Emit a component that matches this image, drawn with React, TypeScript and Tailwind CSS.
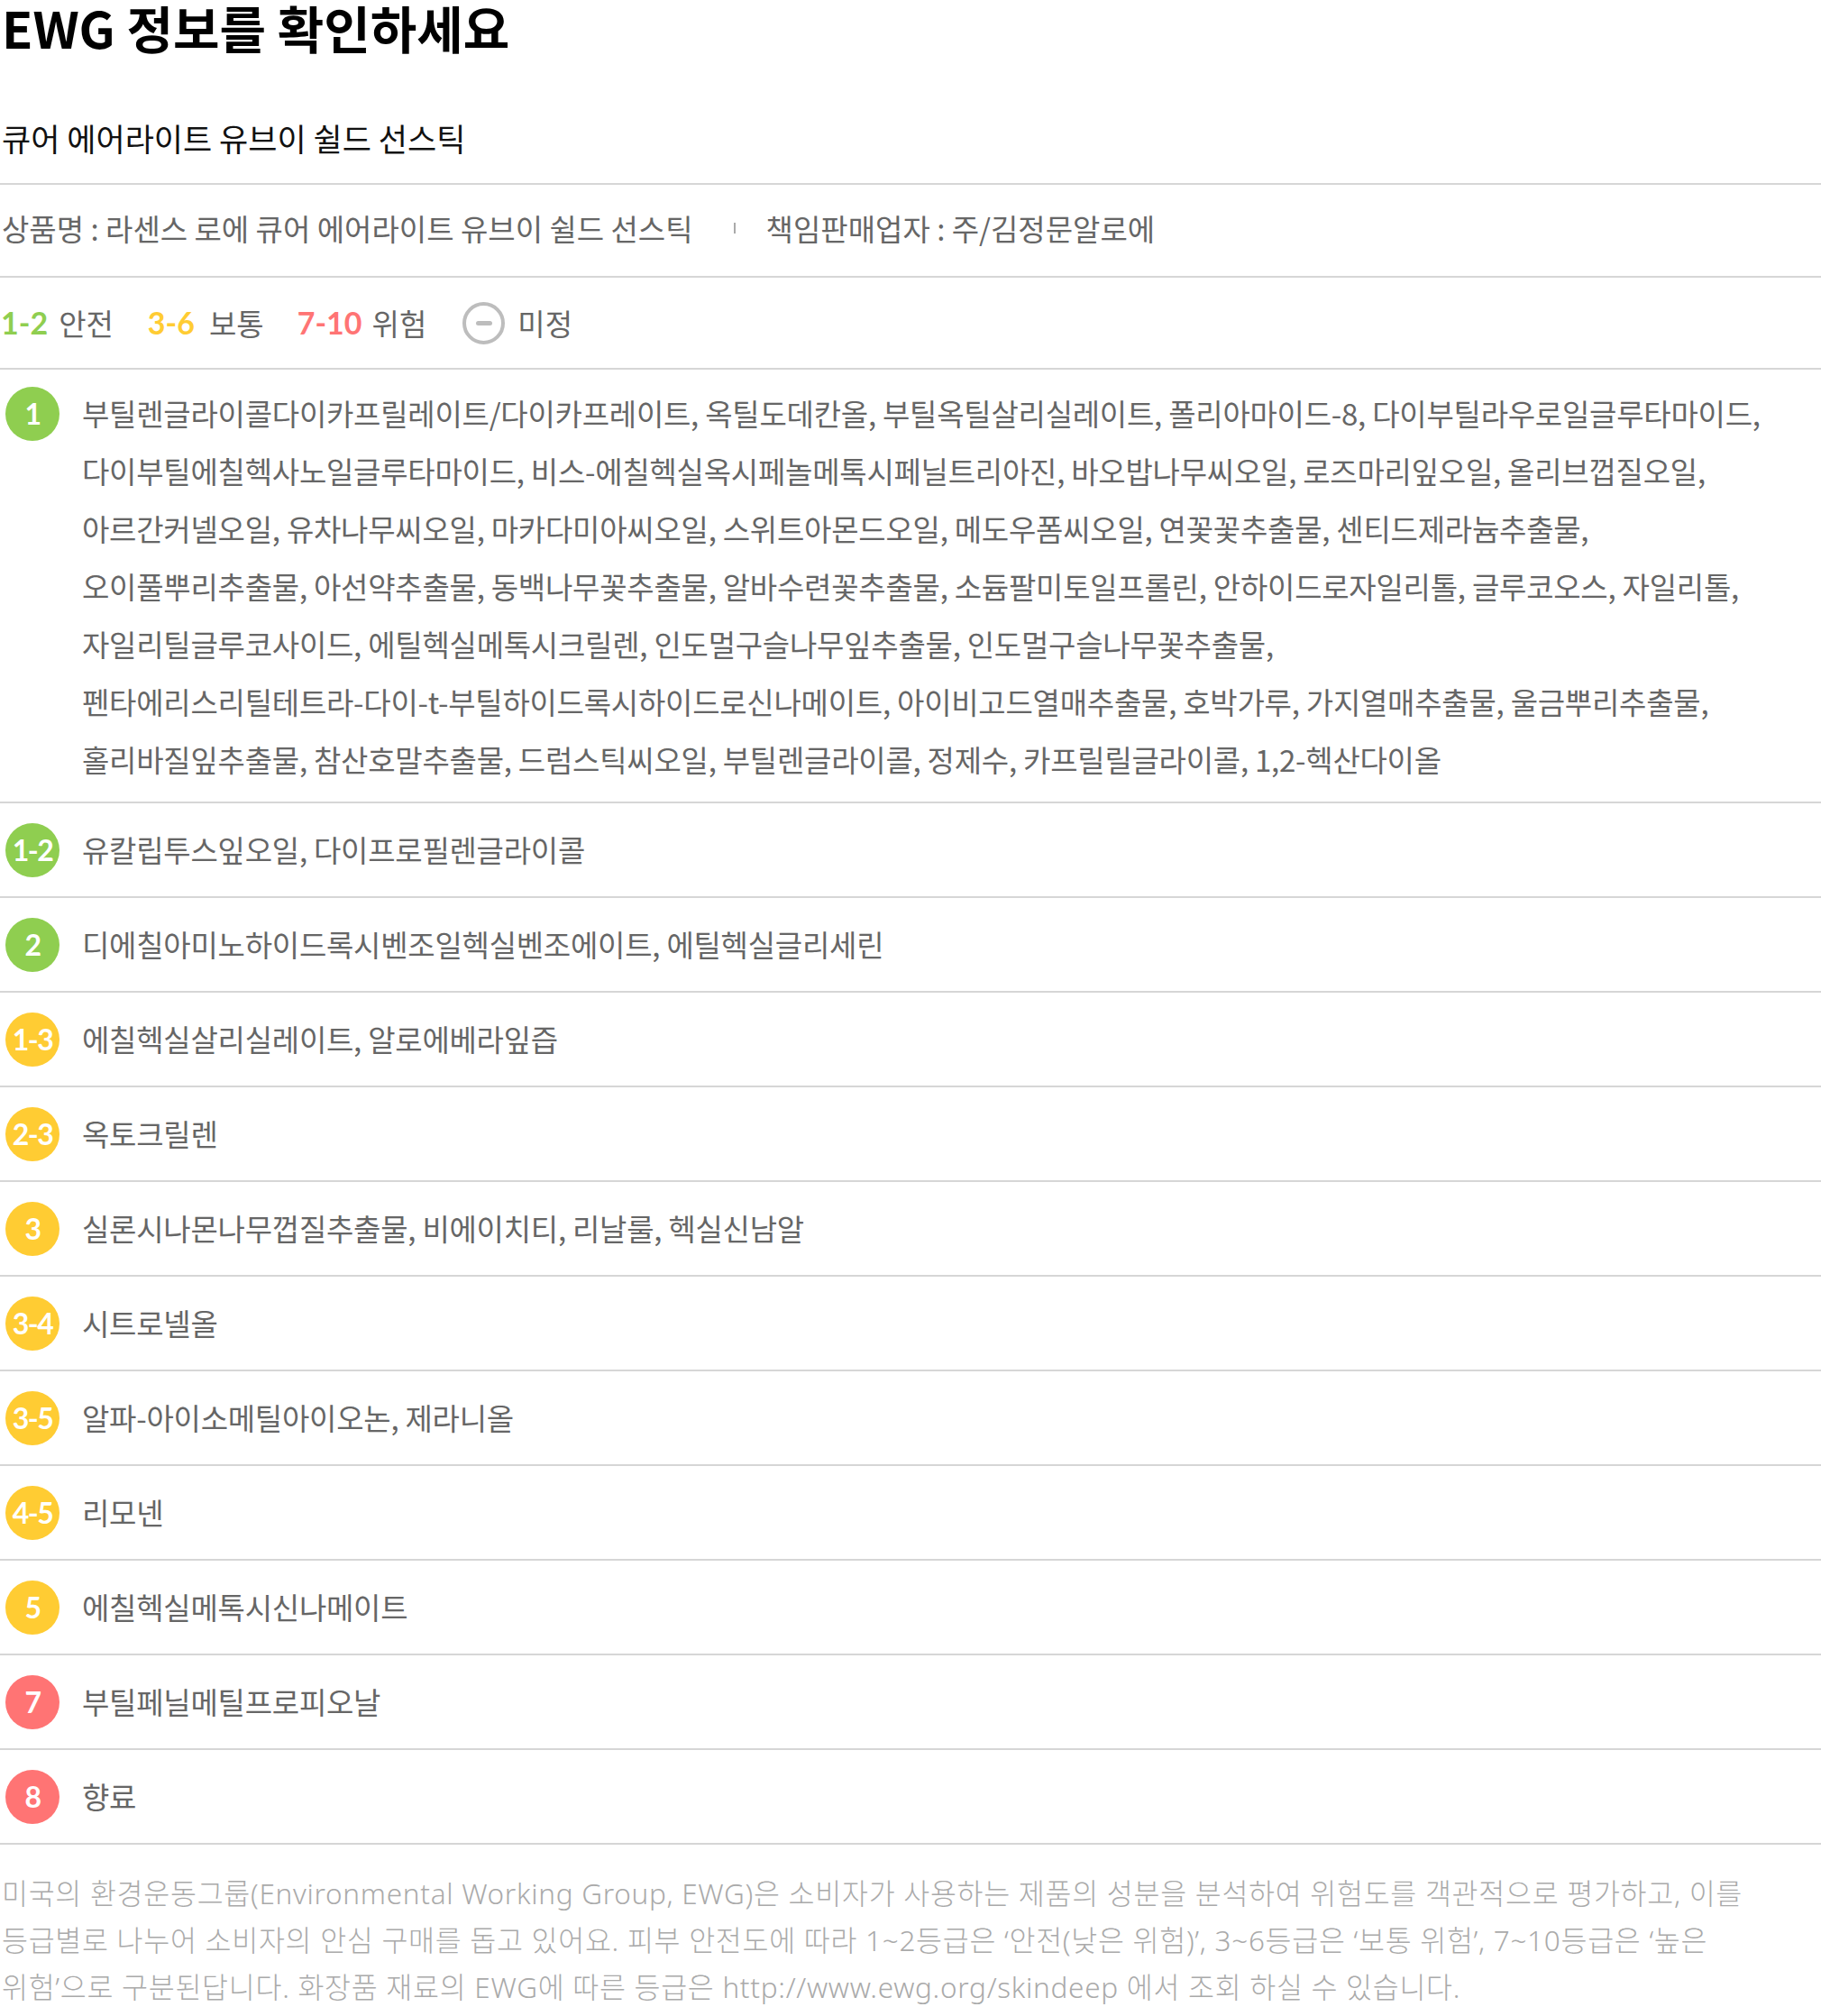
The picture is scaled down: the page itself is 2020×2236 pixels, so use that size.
import React from 'react';

const GREEN = 'bg-[#8fce50]';
const YELLOW = 'bg-[#ffcc33]';
const RED = 'bg-[#ff7474]';

const mainIngredients = [
  '부틸렌글라이콜다이카프릴레이트/다이카프레이트',
  '옥틸도데칸올',
  '부틸옥틸살리실레이트',
  '폴리아마이드-8',
  '다이부틸라우로일글루타마이드',
  '다이부틸에칠헥사노일글루타마이드',
  '비스-에칠헥실옥시페놀메톡시페닐트리아진',
  '바오밥나무씨오일',
  '로즈마리잎오일',
  '올리브껍질오일',
  '아르간커넬오일',
  '유차나무씨오일',
  '마카다미아씨오일',
  '스위트아몬드오일',
  '메도우폼씨오일',
  '연꽃꽃추출물',
  '센티드제라늄추출물',
  '오이풀뿌리추출물',
  '아선약추출물',
  '동백나무꽃추출물',
  '알바수련꽃추출물',
  '소듐팔미토일프롤린',
  '안하이드로자일리톨',
  '글루코오스',
  '자일리톨',
  '자일리틸글루코사이드',
  '에틸헥실메톡시크릴렌',
  '인도멀구슬나무잎추출물',
  '인도멀구슬나무꽃추출물',
  '펜타에리스리틸테트라-다이-t-부틸하이드록시하이드로신나메이트',
  '아이비고드열매추출물',
  '호박가루',
  '가지열매추출물',
  '울금뿌리추출물',
  '홀리바질잎추출물',
  '참산호말추출물',
  '드럼스틱씨오일',
  '부틸렌글라이콜',
  '정제수',
  '카프릴릴글라이콜',
  '1,2-헥산다이올',
];

const rows = [
  { grade: '1-2', color: GREEN, text: '유칼립투스잎오일, 다이프로필렌글라이콜' },
  { grade: '2', color: GREEN, text: '디에칠아미노하이드록시벤조일헥실벤조에이트, 에틸헥실글리세린' },
  { grade: '1-3', color: YELLOW, text: '에칠헥실살리실레이트, 알로에베라잎즙' },
  { grade: '2-3', color: YELLOW, text: '옥토크릴렌' },
  { grade: '3', color: YELLOW, text: '실론시나몬나무껍질추출물, 비에이치티, 리날룰, 헥실신남알' },
  { grade: '3-4', color: YELLOW, text: '시트로넬올' },
  { grade: '3-5', color: YELLOW, text: '알파-아이소메틸아이오논, 제라니올' },
  { grade: '4-5', color: YELLOW, text: '리모넨' },
  { grade: '5', color: YELLOW, text: '에칠헥실메톡시신나메이트' },
  { grade: '7', color: RED, text: '부틸페닐메틸프로피오날' },
  { grade: '8', color: RED, text: '향료' },
];

const Badge = ({ grade, color }: { grade: string; color: string }) => (
  <div
    className={`flex h-[60px] w-[60px] shrink-0 items-center justify-center rounded-full ${color} font-['Lato',sans-serif] text-[32px] font-bold leading-none tracking-[-1.5px] text-white`}
  >
    {grade}
  </div>
);

const App = () => {
  return (
    <div className="w-[2020px] bg-white font-['Noto_Sans_CJK_KR',sans-serif]">
      <div className="border-b-2 border-[#d6d6d6] pl-[2px] pb-[25px]">
        <h1 className="text-[56px] leading-[60px] font-bold text-black">EWG 정보를 확인하세요</h1>
        <h2 className="mt-[68px] text-[35px] leading-[50px] text-[#111]">
          큐어 에어라이트 유브이 쉴드 선스틱
        </h2>
      </div>

      <div className="flex items-center border-b-2 border-[#d6d6d6] pl-[2px] pt-[23px] pb-[28px] text-[33px] leading-[50px] text-[#666]">
        <span>상품명 : 라센스 로에 큐어 에어라이트 유브이 쉴드 선스틱</span>
        <span className="ml-[45px] mr-[34px] h-[12px] w-[2px] bg-[#aaa]" />
        <span>책임판매업자 : 주/김정문알로에</span>
      </div>

      <div className="flex items-center border-b-2 border-[#d6d6d6] pl-[1px] pt-[25px] pb-[25px] text-[33px] leading-[50px] text-[#666]">
        <span className="font-['Lato',sans-serif] text-[34px] font-bold text-[#8fce50]">1-2</span>
        <span className="ml-[12px]">안전</span>
        <span className="ml-[38px] font-['Lato',sans-serif] text-[34px] font-bold text-[#ffcc33]">3-6</span>
        <span className="ml-[16px]">보통</span>
        <span className="ml-[37px] font-['Lato',sans-serif] text-[34px] font-bold text-[#ff7474]">7-10</span>
        <span className="ml-[11px]">위험</span>
        <span className="ml-[40px] flex h-[47px] w-[47px] items-center justify-center rounded-full border-4 border-[#bdbdbd]">
          <span className="h-[5px] w-[18px] rounded-sm bg-[#bdbdbd]" />
        </span>
        <span className="ml-[14px]">미정</span>
      </div>

      <div className="flex items-start border-b-2 border-[#d6d6d6] pl-[6px] pr-[28px] pt-[16px] pb-[15px]">
        <div className="mt-[3px]">
          <Badge grade="1" color={GREEN} />
        </div>
        <p className="ml-[25px] text-[33px] leading-[64px] tracking-[-0.25px] text-[#666]">
          {mainIngredients.map((item, i) => (
            <React.Fragment key={item}>
              <span className="whitespace-nowrap">
                {item}
                {i < mainIngredients.length - 1 ? ',' : ''}
              </span>
              {i < mainIngredients.length - 1 ? ' ' : ''}
            </React.Fragment>
          ))}
        </p>
      </div>

      {rows.map((row) => (
        <div
          key={row.grade}
          className="flex items-center border-b-2 border-[#d6d6d6] pl-[6px] py-[20px]"
        >
          <Badge grade={row.grade} color={row.color} />
          <p className="ml-[25px] text-[33px] leading-[63px] tracking-[-0.25px] text-[#666]">{row.text}</p>
        </div>
      ))}

      <p className="pl-[2px] pt-[28px] pb-[6px] font-['Noto_Sans','Noto_Sans_CJK_KR',sans-serif] text-[31.5px] font-light leading-[52px] tracking-[0.7px] break-keep text-[#aaa]">
        미국의 환경운동그룹(Environmental Working Group, EWG)은 소비자가 사용하는 제품의 성분을 분석하여 위험도를 객관적으로 평가하고, 이를 등급별로 나누어 소비자의 안심 구매를 돕고 있어요. 피부 안전도에 따라 1~2등급은 ‘안전(낮은 위험)’, 3~6등급은 ‘보통 위험’, 7~10등급은 ‘높은 위험’으로 구분된답니다. 화장품 재료의 EWG에 따른 등급은 http://www.ewg.org/skindeep 에서 조회 하실 수 있습니다.
      </p>
    </div>
  );
};

export default App;
